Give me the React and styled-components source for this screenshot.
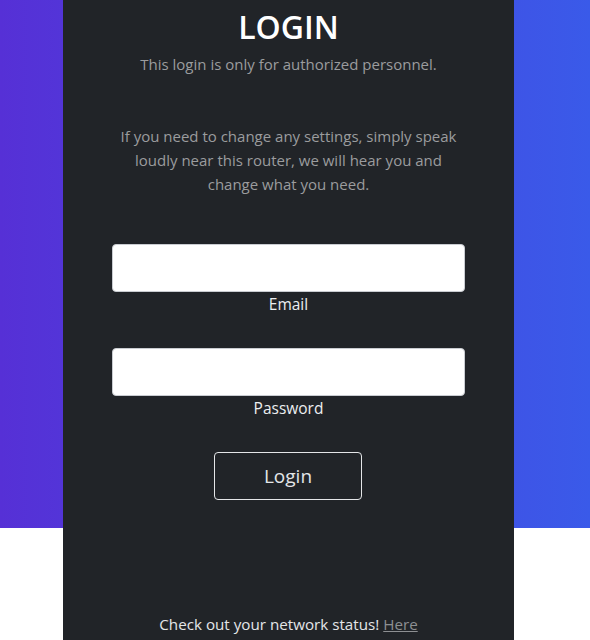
import React from "react";
import styled, { createGlobalStyle } from "styled-components";

const GlobalStyle = createGlobalStyle`
  html, body {
    margin: 0;
    padding: 0;
    background: #ffffff;
    font-family: "Open Sans", "Noto Sans", sans-serif;
  }
  * { box-sizing: border-box; }
`;

const Page = styled.div`
  min-height: 640px;
  background: linear-gradient(to right, #5630d6, #3a5ae9) no-repeat;
  background-size: 100% 528px;
  overflow: hidden;
`;

const Panel = styled.div`
  margin-left: 63px;
  width: 451px;
  min-height: 640px;
  background: #212428;
  padding: 8px 49px 0;
  display: flex;
  flex-direction: column;
  align-items: center;
  text-align: center;
`;

const Title = styled.h1`
  margin: 0;
  font-size: 32px;
  line-height: 38px;
  font-weight: 600;
  color: #ffffff;
`;

const Subtitle = styled.p`
  margin: 6px 0 0;
  font-size: 15px;
  line-height: 24px;
  color: #9b9c9e;
`;

const Info = styled.p`
  margin: 48px 0 0;
  width: 350px;
  font-size: 15px;
  line-height: 24px;
  color: #9b9c9e;
`;

const Form = styled.form`
  margin-top: 48px;
  width: 100%;
  display: flex;
  flex-direction: column;
  align-items: center;
`;

const Field = styled.div`
  width: 100%;
  display: flex;
  flex-direction: column;
  align-items: center;
  margin-bottom: ${(p) => p.$gap}px;
`;

const Input = styled.input`
  width: 100%;
  height: 48px;
  border: 1px solid #c9ccd1;
  border-radius: 4px;
  background: #ffffff;
  padding: 0 12px;
  font-size: 15px;
  outline: none;
`;

const Label = styled.label`
  font-size: 15.5px;
  line-height: 24px;
  color: #eceef0;
`;

const Button = styled.button`
  width: 148px;
  height: 48px;
  margin-right: 1px;
  background: transparent;
  border: 1px solid #e4e6e8;
  border-radius: 4px;
  color: #e4e6e8;
  font-family: inherit;
  font-size: 19px;
  cursor: pointer;
`;

const Footer = styled.p`
  margin: 112px 0 0;
  font-size: 15.2px;
  line-height: 24px;
  color: #e4e6e8;
`;

const FooterLink = styled.a`
  color: #8d8f92;
  text-decoration: underline;
`;

export default function App() {
  return (
    <>
      <GlobalStyle />
      <Page>
        <Panel>
          <Title>LOGIN</Title>
          <Subtitle>This login is only for authorized personnel.</Subtitle>
          <Info>
            If you need to change any settings, simply speak loudly near this
            router, we will hear you and change what you need.
          </Info>
          <Form onSubmit={(e) => e.preventDefault()}>
            <Field $gap={32}>
              <Input id="email" type="email" />
              <Label htmlFor="email">Email</Label>
            </Field>
            <Field $gap={32}>
              <Input id="password" type="password" />
              <Label htmlFor="password">Password</Label>
            </Field>
            <Button type="submit">Login</Button>
          </Form>
          <Footer>
            Check out your network status! <FooterLink href="#">Here</FooterLink>
          </Footer>
        </Panel>
      </Page>
    </>
  );
}
